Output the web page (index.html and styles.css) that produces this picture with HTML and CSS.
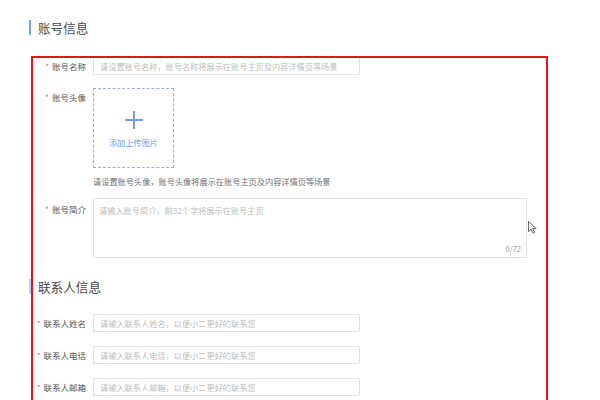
FILE: index.html
```html
<!DOCTYPE html>
<html lang="zh">
<head>
<meta charset="utf-8">
<link rel="stylesheet" href="styles.css">
</head>
<body>
<div class="page">
  <h2 class="sec-title">账号信息</h2>
  <div class="form">
    <div class="row">
      <div class="lbl"><span class="req">*</span>账号名称</div>
      <div class="input">请设置账号名称，账号名称将展示在账号主页及内容详情页等场景</div>
    </div>
    <div class="row">
      <div class="lbl"><span class="req">*</span>账号头像</div>
      <div class="field">
        <div class="upload">
          <span class="plus"></span>
          <span class="up-text">添加上传图片</span>
        </div>
        <div class="hint">请设置账号头像，账号头像将展示在账号主页及内容详情页等场景</div>
      </div>
    </div>
    <div class="row row-area">
      <div class="lbl lbl-area"><span class="req">*</span>账号简介</div>
      <div class="textarea">
        <span class="ph">请输入账号简介，前32个字将展示在账号主页</span>
        <span class="count">0/72</span>
      </div>
    </div>
  </div>

  <h2 class="sec-title sub">联系人信息</h2>
  <div class="form contact">
    <div class="row">
      <div class="lbl"><span class="req">*</span>联系人姓名</div>
      <div class="input">请输入联系人姓名，以便小二更好的联系您</div>
    </div>
    <div class="row">
      <div class="lbl"><span class="req">*</span>联系人电话</div>
      <div class="input">请输入联系人电话，以便小二更好的联系您</div>
    </div>
    <div class="row">
      <div class="lbl"><span class="req">*</span>联系人邮箱</div>
      <div class="input">请输入联系人邮箱，以便小二更好的联系您</div>
    </div>
  </div>

  <div class="annot"></div>
  <svg class="cursor" width="10" height="13" viewBox="0 0 10 13">
    <path d="M0.5 0.5 L0.5 10.5 L3 8.2 L5 12.2 L6.6 11.4 L4.7 7.6 L8.2 7.6 Z" fill="#fff" stroke="#555" stroke-width="0.9" stroke-linejoin="round"/>
  </svg>
</div>
</body>
</html>
```

FILE: styles.css
```css
* { box-sizing: border-box; }
html, body { margin: 0; padding: 0; background: #fff; }
body {
  font-family: "Noto Sans CJK SC", "Noto Sans", sans-serif;
  color: #666;
  width: 600px;
  height: 400px;
  overflow: hidden;
}
.page {
  position: relative;
  padding: 20px 0 0 29px;
  height: 400px;
}
.sec-title {
  margin: 0;
  height: 15px;
  line-height: 15px;
  font-size: 12.6px;
  font-weight: normal;
  color: #4a4a4a;
  border-left: 2.5px solid #6ea2ee;
  padding-left: 7px;
}
.sec-title.sub {
  margin-top: 21px;
  border-left-color: #b9d0f3;
}
.form {
  margin-top: 22px;
  display: flex;
  flex-direction: column;
  gap: 12px;
}
.form.contact {
  margin-top: 20px;
  gap: 13px;
}
.row {
  display: grid;
  grid-template-columns: 57px 1fr;
  column-gap: 7px;
  align-items: start;
}
.row-area { margin-top: -1px; }
.lbl {
  font-size: 8.5px;
  line-height: 18px;
  text-align: right;
  color: #555;
  white-space: nowrap;
}
.lbl-area { line-height: 22px; }
.req {
  color: #ee5a5a;
  margin-right: 3px;
  font-size: 8px;
}
.input {
  width: 267px;
  height: 18px;
  border: 1px solid #e3e3e3;
  border-radius: 1px;
  font-size: 8.2px;
  line-height: 16px;
  padding-left: 6px;
  color: #bdbdbd;
  white-space: nowrap;
  overflow: hidden;
}
.field {
  display: flex;
  flex-direction: column;
}
.upload {
  width: 81px;
  height: 80px;
  border: 1px dashed #8fb2e6;
  display: flex;
  flex-direction: column;
  align-items: center;
  padding-top: 22px;
  gap: 7px;
}
.plus {
  position: relative;
  width: 18px;
  height: 18px;
}
.plus::before, .plus::after {
  content: "";
  position: absolute;
  background: #6b9de8;
}
.plus::before { left: 0; right: 0; top: 8px; height: 2px; }
.plus::after { top: 0; bottom: 0; left: 8px; width: 2px; }
.up-text {
  font-size: 8.2px;
  line-height: 12px;
  color: #6b9de8;
  white-space: nowrap;
}
.hint {
  margin-top: 7px;
  font-size: 8.2px;
  line-height: 12px;
  color: #6f6f6f;
  white-space: nowrap;
}
.textarea {
  width: 434px;
  height: 60px;
  border: 1px solid #e3e3e3;
  border-radius: 1px;
  padding: 5px 5px 2px 5px;
  display: flex;
  flex-direction: column;
}
.ph {
  font-size: 8.2px;
  line-height: 12px;
  color: #bdbdbd;
}
.count {
  margin-top: auto;
  align-self: flex-end;
  font-size: 7.5px;
  line-height: 12px;
  color: #999;
}
.annot {
  position: absolute;
  left: 31px;
  top: 56px;
  width: 517px;
  height: 380px;
  border: 2px solid #e8141c;
}
.cursor {
  position: absolute;
  left: 528px;
  top: 221px;
}
```
